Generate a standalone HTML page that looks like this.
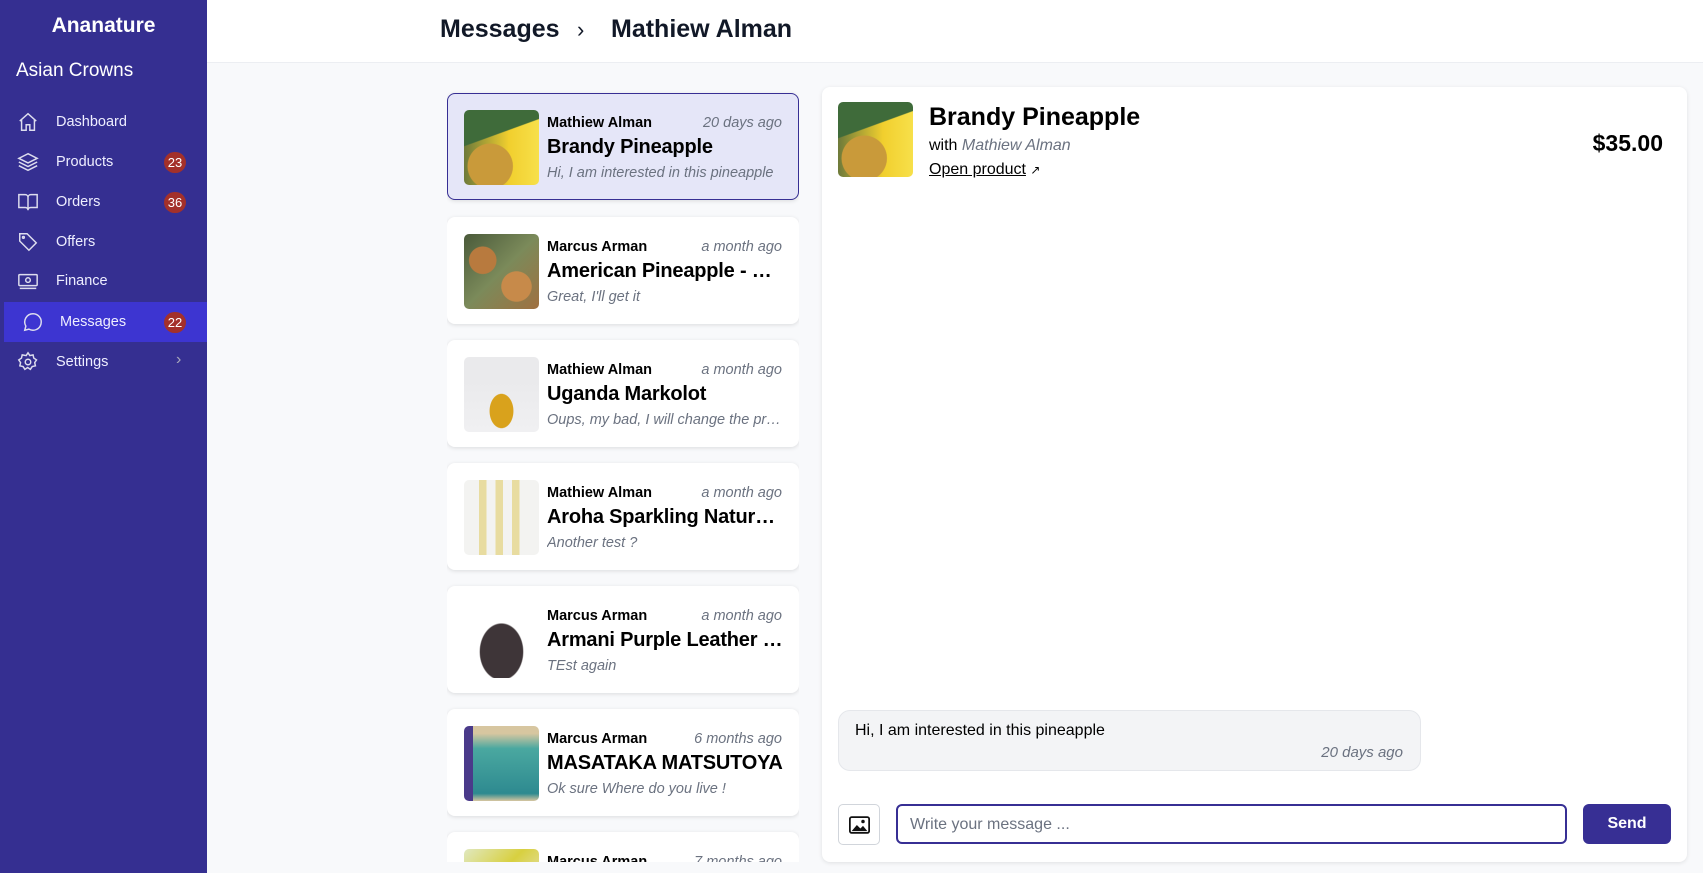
<!DOCTYPE html>
<html style="overflow:hidden;height:873px"><head><meta charset="utf-8"><style>
*{box-sizing:border-box;margin:0;padding:0}
body{width:1703px;height:873px;overflow:hidden;background:#f8f9fb;font-family:"Liberation Sans",sans-serif;position:relative;color:#000}
.sb{position:absolute;left:0;top:0;width:207px;height:873px;background:#352f91;color:#fff}
.brand{position:absolute;top:14px;width:207px;text-align:center;font-size:21px;font-weight:bold}
.shop{position:absolute;left:16px;top:60px;font-size:19px}
.nav{position:absolute;left:0;width:207px;height:40px;font-size:14.5px;color:#eef}
.nav svg{position:absolute;left:17px;top:9px}
.nav span.t{position:absolute;left:56px;top:12px}
.badge{position:absolute;left:164px;top:10px;width:22px;height:21px;border-radius:11px;background:#a3302a;color:#fff;font-size:13px;text-align:center;line-height:21px}
.act{background:#3d35d1;left:4px;width:203px}
.hdr{position:absolute;left:207px;top:0;right:0;height:63px;background:#fff;border-bottom:1px solid #eceef2}
.hdr .h{position:absolute;top:15px;font-size:25px;font-weight:bold;color:#111827}
.list{position:absolute;left:447px;top:0;width:352px;height:862px;overflow:hidden}
.card{position:absolute;left:0;width:352px;height:107px;background:#fff;border-radius:8px;box-shadow:0 1px 4px rgba(0,0,0,.12)}
.card.sel{background:#e5e6f8;border:1.5px solid #372f94}
.img{position:absolute;left:17px;top:17px;width:75px;height:75px;border-radius:5px}
.nm{position:absolute;left:100px;top:22px;font-size:14.5px;font-weight:bold}
.tm{position:absolute;right:17px;top:22px;font-size:14.5px;font-style:italic;color:#6b7280}
.ti{position:absolute;left:100px;top:43px;font-size:20px;letter-spacing:-0.2px;font-weight:bold;width:236px;white-space:nowrap;overflow:hidden;text-overflow:ellipsis}
.pv{position:absolute;left:100px;top:72px;font-size:14.5px;font-style:italic;color:#6b7280;width:236px;white-space:nowrap;overflow:hidden;text-overflow:ellipsis}
.panel{position:absolute;left:822px;top:87px;width:865px;height:775px;background:#fff;border-radius:8px;box-shadow:0 1px 4px rgba(0,0,0,.1)}
.pine{background:radial-gradient(circle at 35% 75%,#c99a3a 0 30%,transparent 31%),linear-gradient(160deg,#3f6b3a 0 35%,transparent 36%),linear-gradient(90deg,#6e7a3a,#f1cf2e 60%,#f7e04a)}
</style></head><body>
<div class="sb">
<div class="brand">Ananature</div>
<div class="shop">Asian Crowns</div>
<div class="nav" style="top:102px"><svg width="22" height="22" viewBox="0 0 24 24" fill="none" stroke="#dde" stroke-width="1.6"><path d="M3 11 12 3l9 8M5 9.5V21h5v-6h4v6h5V9.5"/></svg><span class="t">Dashboard</span></div>
<div class="nav" style="top:142px"><svg width="22" height="22" viewBox="0 0 24 24" fill="none" stroke="#dde" stroke-width="1.6"><path d="M12 3 2 8l10 5 10-5zM2 12l10 5 10-5M2 16l10 5 10-5"/></svg><span class="t">Products</span><span class="badge">23</span></div>
<div class="nav" style="top:182px"><svg width="22" height="22" viewBox="0 0 24 24" fill="none" stroke="#dde" stroke-width="1.6"><path d="M2 4h7a3 3 0 0 1 3 3v14a3 3 0 0 0-3-3H2zM22 4h-7a3 3 0 0 0-3 3v14a3 3 0 0 1 3-3h7z"/></svg><span class="t">Orders</span><span class="badge">36</span></div>
<div class="nav" style="top:222px"><svg width="22" height="22" viewBox="0 0 24 24" fill="none" stroke="#dde" stroke-width="1.6"><path d="M3 3h8l10 10-8 8L3 11z"/><circle cx="7" cy="7" r="1"/></svg><span class="t">Offers</span></div>
<div class="nav" style="top:261px"><svg width="22" height="22" viewBox="0 0 24 24" fill="none" stroke="#dde" stroke-width="1.6"><rect x="2" y="5" width="20" height="12" rx="1"/><circle cx="12" cy="11" r="2.5"/><path d="M3 20h18"/></svg><span class="t">Finance</span></div>
<div class="nav act" style="top:302px"><svg width="22" height="22" viewBox="0 0 24 24" fill="none" stroke="#dde" stroke-width="1.6" style="left:18px"><path d="M12 3a9 9 0 0 0-7.8 13.5L3 21l4.5-1.2A9 9 0 1 0 12 3z"/><path d="M8 12h.01M12 12h.01M16 12h.01" stroke-width="2.2"/></svg><span class="t" style="left:56px">Messages</span><span class="badge" style="left:160px">22</span></div>
<div class="nav" style="top:342px"><svg width="22" height="22" viewBox="0 0 24 24" fill="none" stroke="#dde" stroke-width="1.6"><circle cx="12" cy="12" r="3"/><path d="M12 2l2 3 3.5-.8.8 3.5 3 2-2 3 .8 3.5-3.5.8-2 3-3-2-3 2-2-3-3.5-.8.8-3.5-2-3 3-2 .8-3.5L10 5z"/></svg><span class="t">Settings</span><span style="position:absolute;left:176px;top:9px;color:#aab;font-size:16px">›</span></div>
</div>
<div class="hdr"><span class="h" style="left:233px">Messages</span><span class="h" style="left:370px;font-weight:normal;font-size:22px;top:17px">›</span><span class="h" style="left:404px">Mathiew Alman</span></div>
<div class="list">
<div class="card sel" style="top:93px"><div class="img pine" style="left:16px;top:16px"></div><div class="nm" style="left:99px;top:21px">Mathiew Alman</div><div class="tm" style="right:16px;top:21px">20 days ago</div><div class="ti" style="left:99px;top:42px">Brandy Pineapple</div><div class="pv" style="left:99px;top:71px">Hi, I am interested in this pineapple</div></div>
<div class="card" style="top:217px"><div class="img" style="background:radial-gradient(circle at 70% 70%,#c78a4a 0 20%,transparent 21%),radial-gradient(circle at 25% 35%,#b87a3e 0 18%,transparent 19%),linear-gradient(135deg,#4a5a3a,#7b8a5a 50%,#a07040)"></div><div class="nm">Marcus Arman</div><div class="tm">a month ago</div><div class="ti">American Pineapple - Golden</div><div class="pv">Great, I'll get it</div></div>
<div class="card" style="top:340px"><div class="img" style="background:radial-gradient(ellipse at 50% 72%,#d9a21c 0 22%,transparent 23%),linear-gradient(180deg,#eaeaec 0 30%,#f0f0f2)"></div><div class="nm">Mathiew Alman</div><div class="tm">a month ago</div><div class="ti">Uganda Markolot</div><div class="pv">Oups, my bad, I will change the price</div></div>
<div class="card" style="top:463px"><div class="img" style="background:linear-gradient(90deg,transparent 20%,#e8dca0 20% 30%,transparent 30% 42%,#e8dca0 42% 52%,transparent 52% 64%,#e8dca0 64% 74%,transparent 74%),#f3f3f1"></div><div class="nm">Mathiew Alman</div><div class="tm">a month ago</div><div class="ti">Aroha Sparkling Natural Juice</div><div class="pv">Another test ?</div></div>
<div class="card" style="top:586px"><div class="img" style="background:radial-gradient(ellipse at 50% 65%,#3e3538 0 40%,transparent 42%),#fff"></div><div class="nm">Marcus Arman</div><div class="tm">a month ago</div><div class="ti">Armani Purple Leather Bag</div><div class="pv">TEst again</div></div>
<div class="card" style="top:709px"><div class="img" style="background:linear-gradient(90deg,#4a3a8a 0 12%,transparent 12%),linear-gradient(180deg,#d7c6a0 0 10%,#4aa8a0 30%,#2e8a90 90%,#d7c6a0)"></div><div class="nm">Marcus Arman</div><div class="tm">6 months ago</div><div class="ti">MASATAKA MATSUTOYA</div><div class="pv">Ok sure Where do you live !</div></div>
<div class="card" style="top:832px"><div class="img" style="background:linear-gradient(135deg,#e0e8c0,#d8d040 40%,#eef)"></div><div class="nm">Marcus Arman</div><div class="tm">7 months ago</div></div>
</div>
<div class="panel">
<div class="pine" style="position:absolute;left:16px;top:15px;width:75px;height:75px;border-radius:5px"></div>
<div style="position:absolute;left:107px;top:16px;font-size:25px;font-weight:bold">Brandy Pineapple</div>
<div style="position:absolute;left:107px;top:50px;font-size:16px">with <i style="color:#6b7280">Mathiew Alman</i></div>
<div style="position:absolute;left:107px;top:74px;font-size:16px"><u>Open product</u> <span style="font-size:12px">↗</span></div>
<div style="position:absolute;right:24px;top:43px;font-size:23px;font-weight:bold">$35.00</div>
<div style="position:absolute;left:16px;top:623px;width:583px;height:61px;background:#f3f4f6;border:1px solid #e5e7eb;border-radius:12px">
<div style="position:absolute;left:16px;top:11px;font-size:16px">Hi, I am interested in this pineapple</div>
<div style="position:absolute;right:17px;top:33px;font-size:15px;font-style:italic;color:#6b7280">20 days ago</div></div>
<div style="position:absolute;left:16px;top:717px;width:42px;height:41px;border:1px solid #d1d5db;border-radius:5px"><svg style="position:absolute;left:10px;top:10px" width="21" height="20" viewBox="0 0 24 22"><rect x="1" y="2" width="22" height="18" rx="2" fill="none" stroke="#111" stroke-width="2"/><path d="M3 18l6-7 4 4 3-3 5 6z" fill="#111"/><circle cx="16" cy="7" r="2" fill="#111"/></svg></div>
<div style="position:absolute;left:74px;top:717px;width:671px;height:40px;border:2px solid #372f94;border-radius:6px;font-size:16px;color:#6b7280;padding:10px 0 0 12px">Write your message ...</div>
<div style="position:absolute;left:761px;top:717px;width:88px;height:40px;background:#372f94;border-radius:6px;color:#fff;font-weight:bold;font-size:16px;text-align:center;line-height:40px">Send</div>
</div>
</body></html>
